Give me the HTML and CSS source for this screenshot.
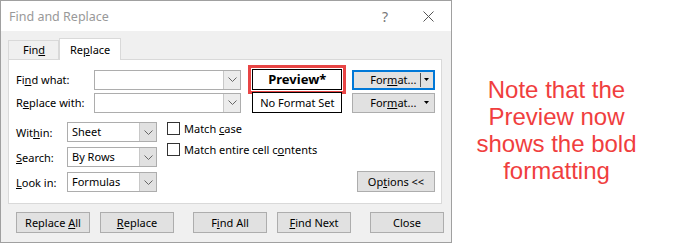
FILE: index.html
```html
<!DOCTYPE html>
<html lang="en">
<head>
  <meta charset="UTF-8">
  <title>Find and Replace</title>
  <link rel="stylesheet" href="styles.css">
</head>
<body>
  <div class="page">
    <div class="dialog">
      <div class="titlebar">
        <span class="title">Find and Replace</span>
        <span class="help">?</span>
        <svg class="close-x" width="11" height="11" viewBox="0 0 11 11">
          <path d="M0.5 0.5L10.5 10.5M10.5 0.5L0.5 10.5" stroke="#555" stroke-width="1" fill="none"/>
        </svg>
      </div>

      <div class="body">
        <div class="tabs">
          <div class="tab">Fin<u>d</u></div>
          <div class="tab active">Re<u>p</u>lace</div>
        </div>

        <div class="panel">
          <div class="find-row">
            <label class="row-label">Fi<u>n</u>d what:</label>
            <div class="combo wide">
              <span class="combo-text"></span>
              <span class="combo-btn">
                <svg width="9" height="5" viewBox="0 0 9 5"><polyline points="0.5,0.5 4.5,4.5 8.5,0.5" fill="none" stroke="#666"/></svg>
              </span>
            </div>
            <div class="preview bold">Preview*</div>
            <div class="format-btn focused">
              <span class="format-text">For<u>m</u>at...</span>
              <span class="split"></span>
              <svg width="5" height="3" viewBox="0 0 5 3"><path d="M0 0H5L2.5 3Z" fill="#000"/></svg>
            </div>
          </div>
          <div class="find-row">
            <label class="row-label">R<u>e</u>place with:</label>
            <div class="combo wide">
              <span class="combo-text"></span>
              <span class="combo-btn">
                <svg width="9" height="5" viewBox="0 0 9 5"><polyline points="0.5,0.5 4.5,4.5 8.5,0.5" fill="none" stroke="#666"/></svg>
              </span>
            </div>
            <div class="preview">No Format Set</div>
            <div class="format-btn">
              <span class="format-text">For<u>m</u>at...</span>
              <svg width="5" height="3" viewBox="0 0 5 3"><path d="M0 0H5L2.5 3Z" fill="#000"/></svg>
            </div>
          </div>

          <div class="lower">
            <div class="opt-grid">
              <label class="opt-label">Wit<u>h</u>in:</label>
              <div class="combo small">
                <span class="combo-text">Sheet</span>
                <span class="combo-btn gray">
                  <svg width="9" height="5" viewBox="0 0 9 5"><polyline points="0.5,0.5 4.5,4.5 8.5,0.5" fill="none" stroke="#666"/></svg>
                </span>
              </div>
              <label class="opt-label"><u>S</u>earch:</label>
              <div class="combo small">
                <span class="combo-text">By Rows</span>
                <span class="combo-btn gray">
                  <svg width="9" height="5" viewBox="0 0 9 5"><polyline points="0.5,0.5 4.5,4.5 8.5,0.5" fill="none" stroke="#666"/></svg>
                </span>
              </div>
              <label class="opt-label"><u>L</u>ook in:</label>
              <div class="combo small">
                <span class="combo-text">Formulas</span>
                <span class="combo-btn gray">
                  <svg width="9" height="5" viewBox="0 0 9 5"><polyline points="0.5,0.5 4.5,4.5 8.5,0.5" fill="none" stroke="#666"/></svg>
                </span>
              </div>
            </div>

            <div class="checks">
              <div class="check"><span class="box"></span><span>Match <u>c</u>ase</span></div>
              <div class="check"><span class="box"></span><span>Match entire cell c<u>o</u>ntents</span></div>
            </div>

            <div class="btn options">Op<u>t</u>ions &lt;&lt;</div>
          </div>
        </div>

        <div class="actions">
          <div class="btn">Replace <u>A</u>ll</div>
          <div class="btn"><u>R</u>eplace</div>
          <div class="btn far">F<u>i</u>nd All</div>
          <div class="btn"><u>F</u>ind Next</div>
          <div class="btn far">Close</div>
        </div>
      </div>
    </div>

    <div class="note">Note that the<br>Preview now<br>shows the bold<br>formatting</div>
  </div>
</body>
</html>
```

FILE: styles.css
```css
* {
  box-sizing: border-box;
}

body {
  margin: 0;
  background-color: #fff;
  font-family: "Noto Sans", sans-serif;
  font-size: 11px;
  color: #000;
}

.page {
  display: flex;
  height: 243px;
}

.dialog {
  width: 452px;
  height: 243px;
  border: 1px solid #a0a0a0;
  background-color: #f0f0f0;
  display: flex;
  flex-direction: column;
}

.titlebar {
  height: 30px;
  background-color: #fff;
  display: flex;
  align-items: center;
  padding-left: 8px;
  padding-right: 17px;
}

.title {
  flex: 1;
  color: #999;
  font-size: 12.5px;
}

.help {
  color: #777;
  font-size: 14px;
  margin-right: 35px;
}

.body {
  padding: 7px 0 0 7px;
}

.tabs {
  display: flex;
  align-items: flex-end;
  height: 21px;
}

.tab {
  height: 19px;
  width: 51px;
  border: 1px solid #d9d9d9;
  border-bottom: none;
  padding-left: 14px;
  line-height: 18px;
}

.tab.active {
  width: 62px;
  height: 22px;
  margin-bottom: -1px;
  background-color: #fff;
  padding-left: 10px;
  line-height: 21px;
  position: relative;
  z-index: 1;
}

.panel {
  width: 434px;
  height: 145px;
  border: 1px solid #d9d9d9;
  background-color: #fff;
  padding: 8px 6px 0 7px;
}

.find-row {
  display: flex;
  align-items: center;
  height: 23px;
}

.row-label {
  width: 78px;
}

.combo {
  display: flex;
  height: 20px;
  border: 1px solid #adadad;
  background-color: #fff;
}

.combo.wide {
  width: 148px;
}

.combo.small {
  width: 90px;
}

.combo-text {
  flex: 1;
  padding-left: 4px;
  line-height: 18px;
}

.combo-btn {
  width: 17px;
  border-left: 1px solid #c8c8c8;
  background-color: #ececec;
  display: flex;
  align-items: center;
  justify-content: center;
}

.combo-btn.gray {
  background-color: #e1e1e1;
}

.preview {
  width: 90px;
  height: 21px;
  margin-left: 11px;
  border: 1px solid #000;
  background-color: #fff;
  text-align: center;
  line-height: 19px;
}

.preview.bold {
  font-weight: bold;
  font-size: 13px;
  outline: 3px solid #e84545;
  outline-offset: 1px;
}

.format-btn {
  width: 83px;
  height: 20px;
  margin-left: 10px;
  border: 1px solid #adadad;
  background-color: #e1e1e1;
  display: flex;
  align-items: center;
  padding-right: 5px;
}

.format-btn.focused {
  border: 2px solid #0078d7;
  padding-right: 4px;
}

.format-text {
  flex: 1;
  padding-left: 17px;
}

.format-btn.focused .format-text {
  padding-left: 16px;
}

.split {
  width: 1px;
  height: 14px;
  background-color: #555;
  margin-right: 3px;
}

.lower {
  display: flex;
  margin-top: 8px;
  height: 70px;
}

.opt-grid {
  display: grid;
  grid-template-columns: 51px 90px;
  grid-auto-rows: 20px;
  row-gap: 5px;
  align-items: center;
}

.checks {
  margin-left: 10px;
}

.check {
  display: flex;
  align-items: center;
  height: 13px;
  margin-bottom: 8px;
}

.box {
  width: 13px;
  height: 13px;
  border: 1px solid #333;
  background-color: #fff;
  margin-right: 4px;
}

.btn {
  height: 21px;
  width: 74px;
  border: 1px solid #adadad;
  background-color: #e1e1e1;
  text-align: center;
  line-height: 19px;
}

.options {
  width: 78px;
  margin-left: auto;
  align-self: flex-end;
}

.actions {
  display: flex;
  gap: 10px;
  margin-top: 8px;
  padding-left: 8px;
}

.actions .far {
  margin-left: 9px;
}

.note {
  flex: 1;
  display: flex;
  align-items: center;
  justify-content: center;
  text-align: center;
  padding: 17px 12px 0 0;
  font-family: "Liberation Sans", Arial, sans-serif;
  font-size: 24px;
  line-height: 27px;
  color: #f03e3e;
}
```
